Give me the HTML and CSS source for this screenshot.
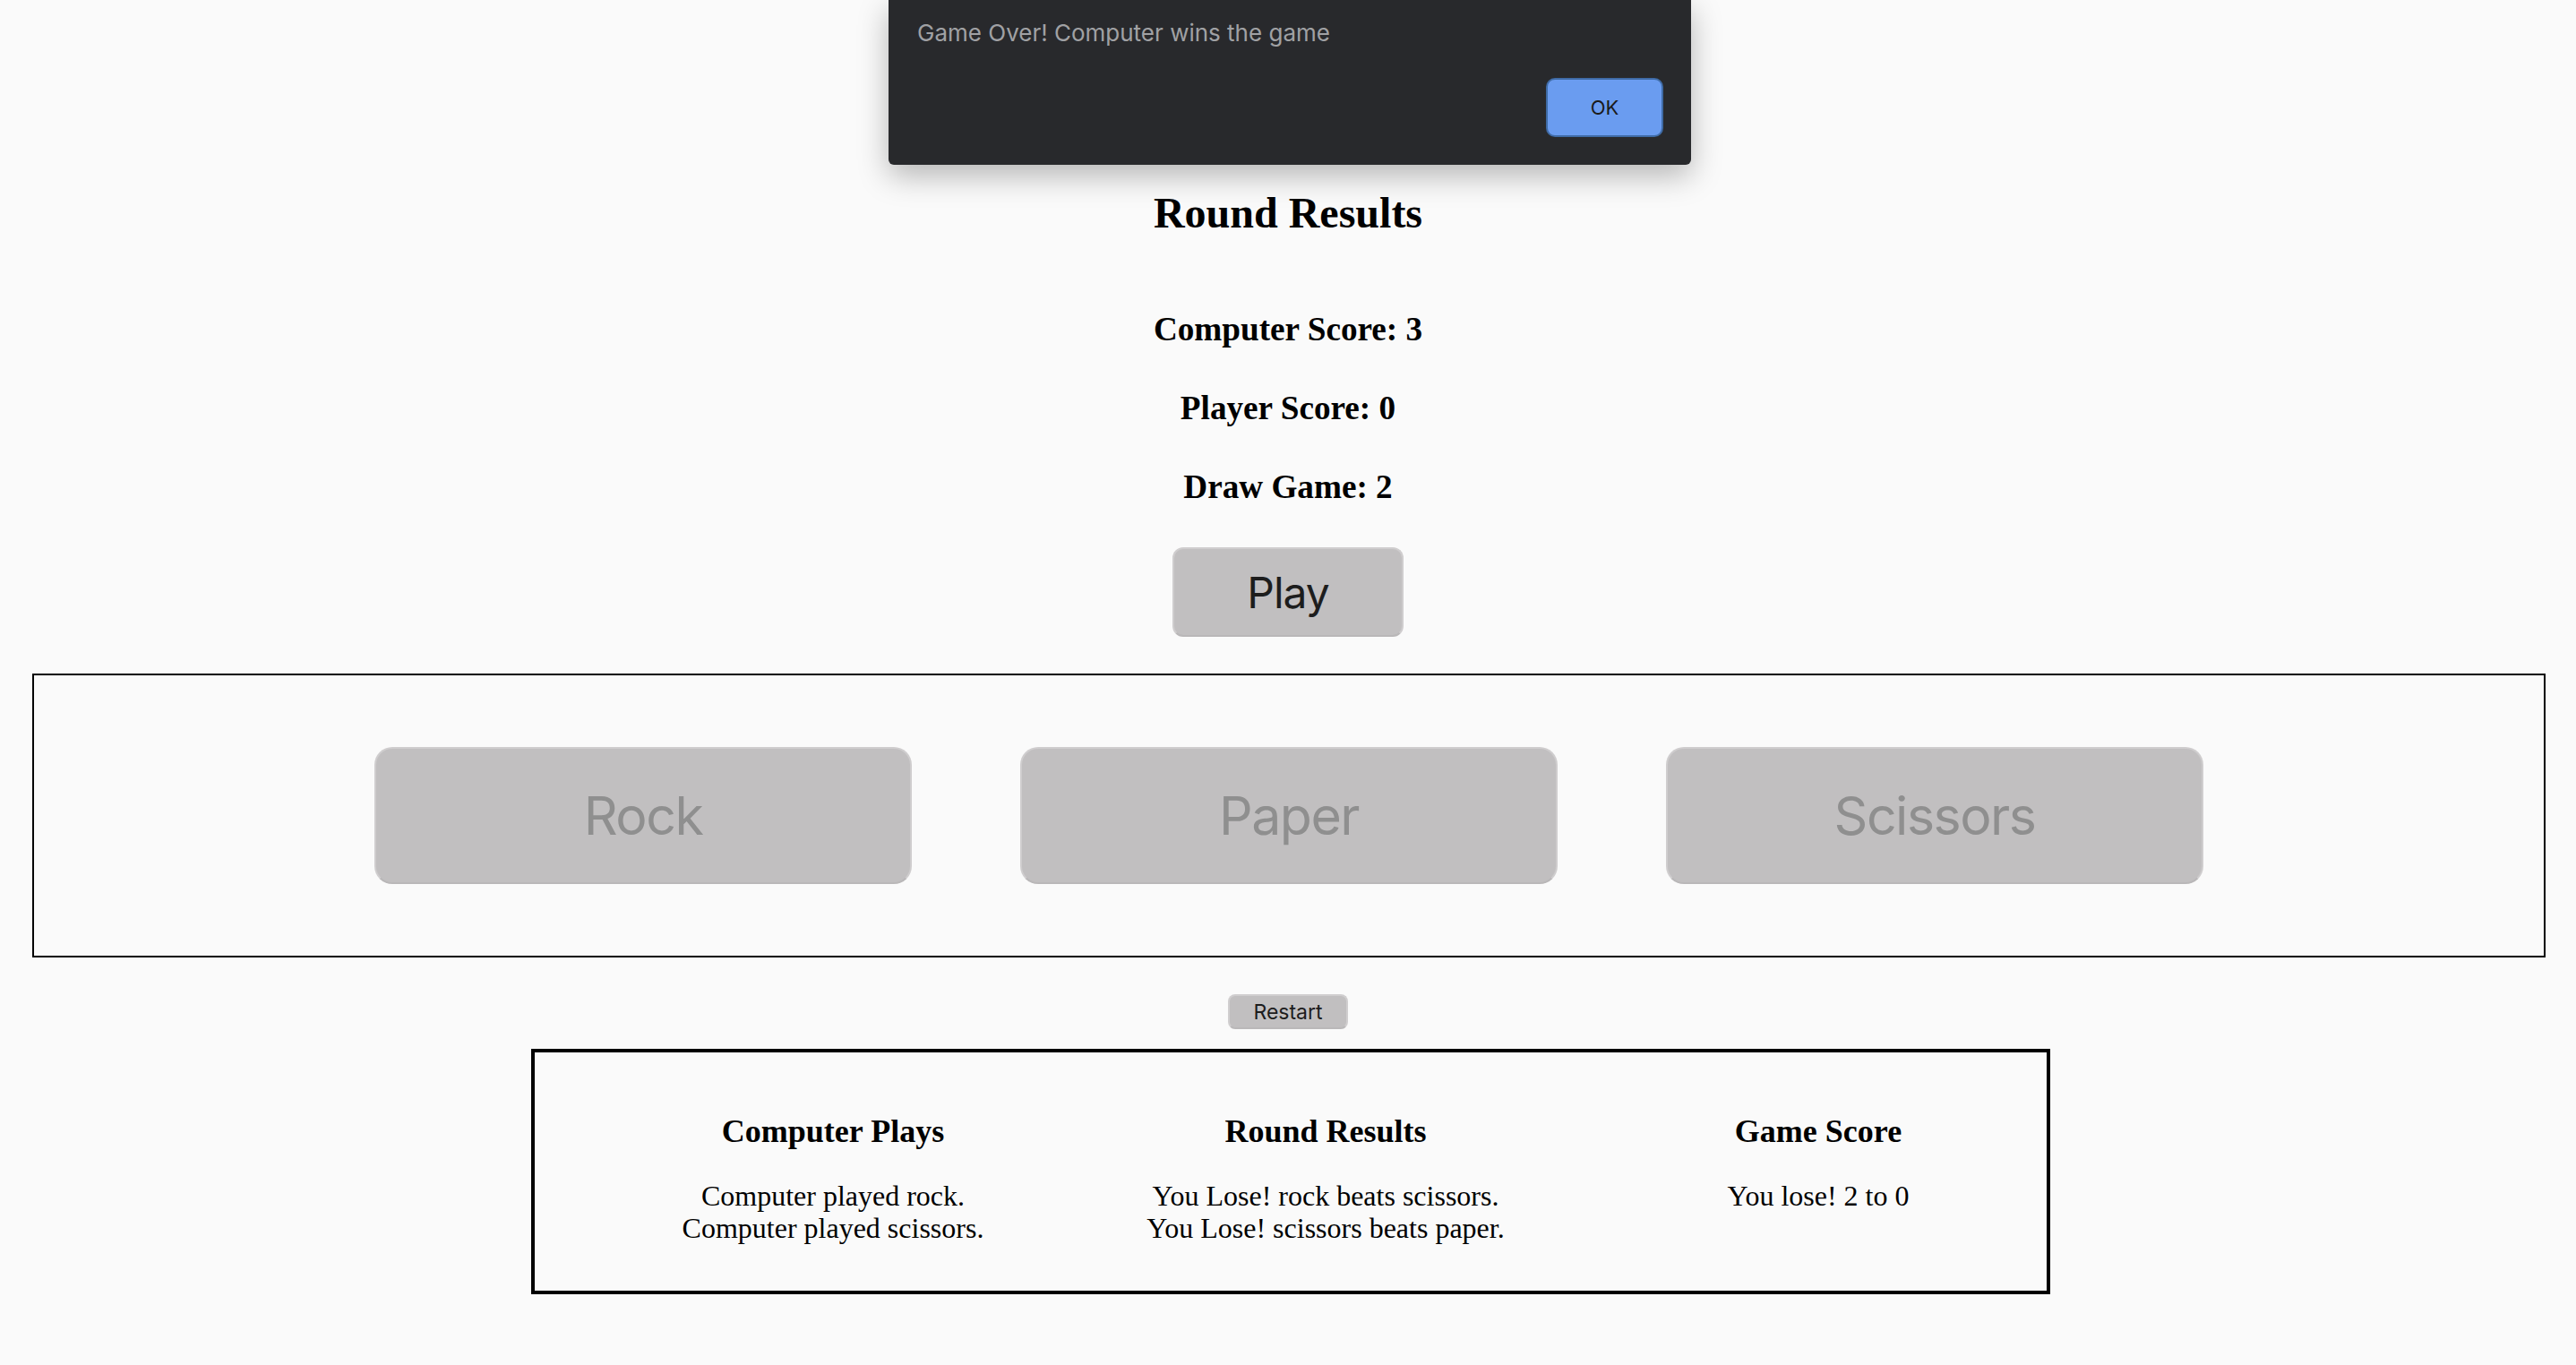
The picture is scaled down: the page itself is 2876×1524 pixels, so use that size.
FILE: index.html
```html
<!DOCTYPE html>
<html lang="en">
<head>
<meta charset="utf-8">
<title>Rock Paper Scissors</title>
<link rel="stylesheet" href="styles.css">
</head>
<body>
<main class="page">
  <h2 class="title">Round Results</h2>
  <div class="scores">
    <h3 class="score">Computer Score: 3</h3>
    <h3 class="score">Player Score: 0</h3>
    <h3 class="score">Draw Game: 2</h3>
  </div>
  <button class="play">Play</button>
  <section class="choices">
    <button class="choice" disabled>Rock</button>
    <button class="choice" disabled>Paper</button>
    <button class="choice" disabled>Scissors</button>
  </section>
  <button class="restart">Restart</button>
  <section class="results">
    <div class="col">
      <h3 class="col-title">Computer Plays</h3>
      <p class="col-text">Computer played rock.<br>Computer played scissors.</p>
    </div>
    <div class="col">
      <h3 class="col-title">Round Results</h3>
      <p class="col-text">You Lose! rock beats scissors.<br>You Lose! scissors beats paper.</p>
    </div>
    <div class="col">
      <h3 class="col-title">Game Score</h3>
      <p class="col-text">You lose! 2 to 0</p>
    </div>
  </section>
</main>
<div class="dialog">
  <p class="dialog-msg">Game Over! Computer wins the game</p>
  <div class="dialog-actions"><button class="dialog-ok">OK</button></div>
</div>
</body>
</html>
```

FILE: styles.css
```css
html, body {
  margin: 0;
  padding: 0;
  background: #fafafa;
}
body {
  font-family: "Liberation Serif", "Times New Roman", serif;
  color: #000;
  width: 2876px;
  height: 1524px;
  overflow: hidden;
  position: relative;
}
.page {
  display: flex;
  flex-direction: column;
  align-items: center;
  padding-top: 210px;
  text-align: center;
}
.title {
  font-size: 48px;
  line-height: 56px;
  font-weight: bold;
  margin: 0 0 80px;
}
.scores {
  display: flex;
  flex-direction: column;
  gap: 44px;
  align-items: center;
}
.score {
  font-size: 37.2px;
  line-height: 44px;
  font-weight: bold;
  margin: 0;
}
.play {
  margin-top: 45px;
  width: 258px;
  height: 100px;
  font-family: Inter, "Noto Sans", sans-serif;
  font-size: 48px;
  letter-spacing: -1px;
  color: #1d1d1d;
  background: #c1bfc0;
  border: 2px solid #cfcdce;
  border-bottom-color: #b9b7b8;
  border-radius: 12px;
  padding: 0;
}
.choices {
  align-self: stretch;
  margin: 41px 34px 0 36px;
  border: 2px solid #000;
  padding: 80px 0;
  display: flex;
  justify-content: center;
  gap: 121px;
}
.choice {
  width: 600px;
  height: 153px;
  font-family: Inter, "Noto Sans", sans-serif;
  font-size: 59px;
  letter-spacing: -1.5px;
  color: #8f8f8f;
  background: #c1bfc0;
  border: 2px solid #cfcdce;
  border-bottom-color: #b9b7b8;
  border-radius: 20px;
  padding: 0;
}
.restart {
  margin-top: 41px;
  width: 134px;
  height: 39px;
  font-family: Inter, "Noto Sans", sans-serif;
  font-size: 23px;
  color: #1d1d1d;
  background: #c1bfc0;
  border: 2px solid #d0cecf;
  border-bottom-color: #bab8b9;
  border-radius: 8px;
  padding: 0;
}
.results {
  align-self: flex-start;
  margin: 22px 0 0 593px;
  width: 1696px;
  box-sizing: border-box;
  border: 4px solid #000;
  padding: 66px 0 52px 83px;
  display: grid;
  grid-template-columns: repeat(3, 500px);
  column-gap: 50px;
  align-items: start;
}
.col {
  text-align: center;
}
.col-title {
  font-size: 36px;
  line-height: 44px;
  font-weight: bold;
  margin: 0 0 32px;
}
.col-text {
  font-size: 32px;
  line-height: 36px;
  margin: 0;
}
.dialog {
  position: absolute;
  left: 992px;
  top: 0;
  width: 896px;
  height: 184px;
  box-sizing: border-box;
  background: #28292c;
  border-radius: 0 0 6px 6px;
  box-shadow: 0 12px 34px rgba(0, 0, 0, 0.28);
  padding: 21px 31px 31px 32px;
  font-family: Inter, "Noto Sans", sans-serif;
}
.dialog-msg {
  margin: 0;
  font-size: 26px;
  line-height: 31px;
  color: #a0a1a4;
  text-align: left;
}
.dialog-actions {
  display: flex;
  justify-content: flex-end;
  margin-top: 35px;
}
.dialog-ok {
  width: 131px;
  height: 66px;
  background: #6a9cf0;
  border: 2px solid #3f6ba6;
  border-radius: 10px;
  font-family: Inter, "Noto Sans", sans-serif;
  font-size: 22px;
  color: #1b1b1b;
  padding: 0;
}
```
